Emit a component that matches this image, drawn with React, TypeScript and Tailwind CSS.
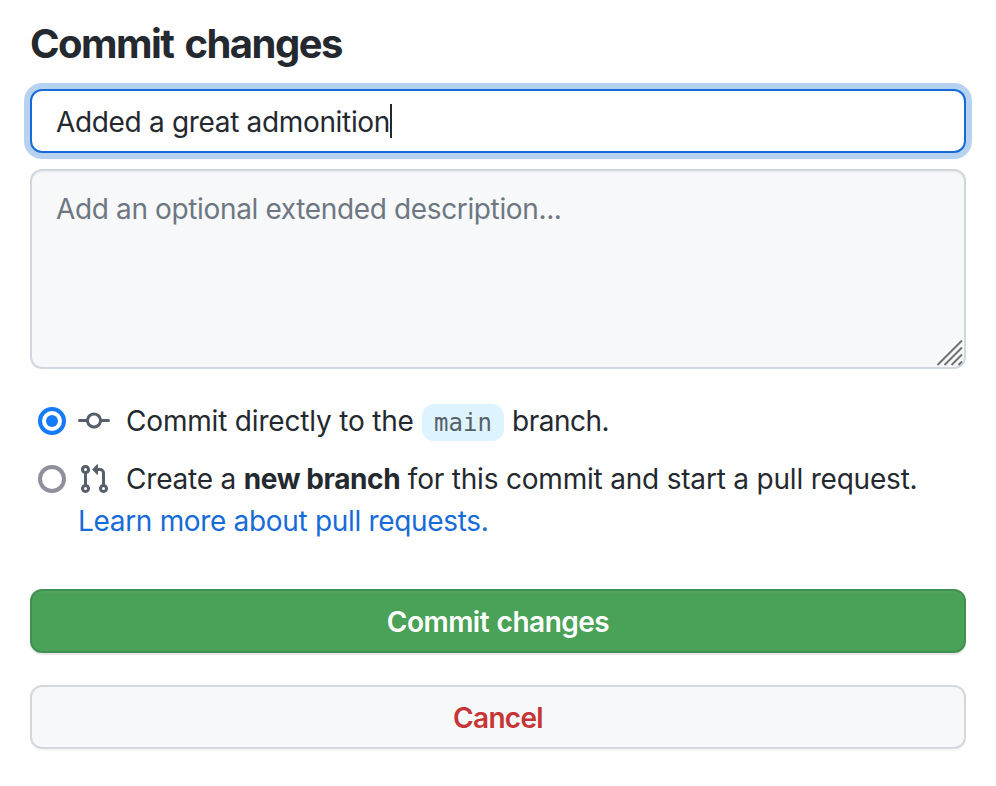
export default function App() {
  return (
    <main className="h-[786px] w-[996px] overflow-hidden bg-white px-[30px] pt-5 font-['Inter',sans-serif] text-[28px] leading-[42px] font-normal text-[#24292f]">
      <h2 className="flex h-12 items-center text-[40px] leading-[48px] font-bold tracking-[-1.52px] whitespace-nowrap [word-spacing:3px]">Commit changes</h2>
      <div className="mt-[21px] flex h-16 items-center rounded-xl border-2 border-[#176bd8] bg-white px-6 ring-6 ring-[#b7d2f1]">
        <span className="pt-[2px] whitespace-nowrap tracking-[-0.33px]">Added a great admonition</span>
        <span className="h-[34px] w-[2px] bg-[#24292f]" />
      </div>
      <div className="relative mt-4 h-[200px] rounded-xl border-2 border-[#d0d7de] bg-[#f6f8fa] px-6 pt-[17px] text-[#6e7781] shadow-[inset_0_2px_0_rgba(208,215,222,0.2)]">
        <span className="whitespace-nowrap tracking-[-0.36px]">Add an optional extended description...</span>
        <svg className="absolute right-0 bottom-0" width="28" height="28" viewBox="0 0 28 28" stroke="#707276" strokeWidth="2">
          <path d="M1.5 26L26 1.5M8.5 26L26 8.5M15.5 26L26 15.5M22.5 26L26 22.5" />
        </svg>
      </div>
      <div className="mt-8 flex h-10 items-center pl-2 whitespace-nowrap">
        <span className="flex size-7 items-center justify-center rounded-full border-4 border-[#167bf9]"><span className="size-3 rounded-full bg-[#167bf9]" /></span>
        <svg className="ml-3" width="32" height="32" viewBox="0 0 16 16" fill="#57606a"><path fillRule="evenodd" d="M10.5 7.75a2.5 2.5 0 11-5 0 2.5 2.5 0 015 0zm1.43.75a4.002 4.002 0 01-7.86 0H.75a.75.75 0 110-1.5h3.32a4.001 4.001 0 017.86 0h3.32a.75.75 0 110 1.5h-3.32z" /></svg>
        <span className="ml-4 w-[288px] tracking-[-0.18px]">Commit directly to the</span>
        <code className="mt-[2px] ml-2 flex h-[37px] w-[82px] items-center justify-center rounded-xl bg-[#ddf4ff] pt-[2px] font-['DejaVu_Sans_Mono',monospace] text-[24px] font-normal text-[#57606a]">main</code>
        <span className="ml-2 tracking-[-0.5px]">branch.</span>
      </div>
      <div className="mt-[18px] flex h-10 items-center pl-2 whitespace-nowrap">
        <span className="size-7 rounded-full border-4 border-[#8f8f9d]" />
        <svg className="ml-3" width="32" height="32" viewBox="0 0 16 16" fill="#57606a"><path fillRule="evenodd" d="M7.177 3.073L9.573.677A.25.25 0 0110 .854v4.792a.25.25 0 01-.427.177L7.177 3.427a.25.25 0 010-.354zM3.75 2.5a.75.75 0 100 1.5.75.75 0 000-1.5zm-2.25.75a2.25 2.25 0 113 2.122v5.256a2.251 2.251 0 11-1.5 0V5.372A2.25 2.25 0 011.5 3.25zM11 2.5h-1V4h1a1 1 0 011 1v5.628a2.251 2.251 0 101.5 0V5A2.5 2.5 0 0011 2.5zm1 10.25a.75.75 0 111.5 0 .75.75 0 01-1.5 0zM3.75 12a.75.75 0 100 1.5.75.75 0 000-1.5z" /></svg>
        <span className="ml-4 tracking-[-0.2px]">Create a <b className="font-bold tracking-[-0.4px]">new branch</b> for this commit and start a pull request.</span>
      </div>
      <a className="mt-px block pl-12 tracking-[-0.32px] text-[#176bd8]">Learn more about pull requests.</a>
      <button className="mt-[47px] flex h-16 w-full items-center justify-center rounded-xl border-2 border-[#409151] bg-[#4aa158] pt-[2px] font-semibold tracking-[-0.5px] text-white shadow-[0_2px_0_rgba(27,31,36,0.1),inset_0_2px_0_rgba(255,255,255,0.03)] [word-spacing:1px]">Commit changes</button>
      <button className="mt-8 flex h-16 w-full items-center justify-center rounded-xl border-2 border-[#d4d8dc] bg-[#f6f8fa] pt-[2px] font-semibold tracking-[-0.7px] text-[#c63535] shadow-[0_2px_0_rgba(27,31,36,0.04)]">Cancel</button>
    </main>
  );
}
